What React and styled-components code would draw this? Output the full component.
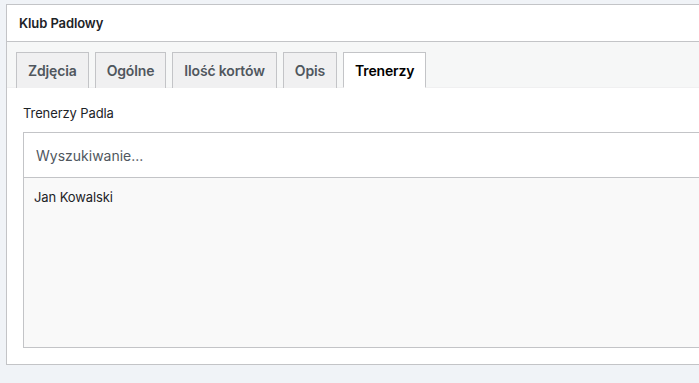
import React, { useState } from "react";
import styled, { createGlobalStyle } from "styled-components";

const GlobalStyle = createGlobalStyle`
  html, body {
    margin: 0;
    padding: 0;
    background: #f0f3f7;
    overflow: hidden;
  }
  body {
    font-family: Inter, "Noto Sans", "Liberation Sans", sans-serif;
    color: #1d2327;
  }
`;

const Page = styled.div`
  padding: 4px 0 0 6px;
  height: 383px;
  box-sizing: border-box;
`;

const Panel = styled.div`
  width: 740px;
  height: 361px;
  box-sizing: border-box;
  background: #fff;
  border: 1px solid #c3c4c7;
  display: flex;
  flex-direction: column;
`;

const PanelHeader = styled.div`
  height: 36px;
  display: flex;
  align-items: center;
  padding: 0 12px;
  border-bottom: 1px solid #c3c4c7;
  font-size: 13px;
  font-weight: 600;
  letter-spacing: -0.1px;
`;

const TabBar = styled.div`
  background: #f6f7f7;
  display: flex;
  align-items: flex-end;
  gap: 6px;
  padding: 10px 9px 0;
  height: 46px;
  box-sizing: border-box;
  border-bottom: 1px solid #f0f0f1;
`;

const Tab = styled.button`
  height: 36px;
  margin-bottom: -1px;
  padding: 0 11px;
  font-family: inherit;
  font-size: 14px;
  font-weight: 600;
  letter-spacing: -0.15px;
  border: 1px solid #c3c4c7;
  border-bottom: ${({ $active }) => ($active ? "1px solid #fff" : "none")};
  background: ${({ $active }) => ($active ? "#fff" : "#f0f0f1")};
  color: ${({ $active }) => ($active ? "#000" : "#50575e")};
  cursor: pointer;
`;

const Body = styled.div`
  padding: 17px 16px 16px;
  display: flex;
  flex-direction: column;
  flex: 1;
`;

const Label = styled.div`
  font-size: 13px;
  color: #1d2327;
  margin-bottom: 11px;
  letter-spacing: -0.1px;
`;

const Picker = styled.div`
  border: 1px solid #c3c4c7;
  display: flex;
  flex-direction: column;
  flex: 1;
`;

const Search = styled.input`
  height: 44px;
  border: none;
  border-bottom: 1px solid #c3c4c7;
  padding: 0 12px;
  font-family: inherit;
  font-size: 14px;
  color: #1d2327;
  outline: none;
  &::placeholder {
    color: #50575e;
  }
`;

const List = styled.ul`
  list-style: none;
  margin: 0;
  padding: 9px 10px;
  background: #f9f9f9;
  flex: 1;
`;

const Item = styled.li`
  font-size: 13px;
  color: #1d2327;
  padding: 2px 0;
  letter-spacing: -0.1px;
`;

const tabs = ["Zdjęcia", "Ogólne", "Ilość kortów", "Opis", "Trenerzy"];

export default function App() {
  const [active, setActive] = useState("Trenerzy");
  return (
    <>
      <GlobalStyle />
      <Page>
        <Panel>
          <PanelHeader>Klub Padlowy</PanelHeader>
          <TabBar>
            {tabs.map((t) => (
              <Tab key={t} $active={t === active} onClick={() => setActive(t)}>
                {t}
              </Tab>
            ))}
          </TabBar>
          <Body>
            <Label>Trenerzy Padla</Label>
            <Picker>
              <Search placeholder="Wyszukiwanie..." />
              <List>
                <Item>Jan Kowalski</Item>
              </List>
            </Picker>
          </Body>
        </Panel>
      </Page>
    </>
  );
}
